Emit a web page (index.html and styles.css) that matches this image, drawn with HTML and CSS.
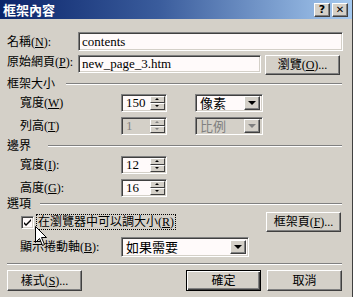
FILE: index.html
```html
<!DOCTYPE html>
<html lang="zh-Hant">
<head>
  <meta charset="UTF-8" />
  <title>框架內容</title>
  <link rel="stylesheet" href="styles.css">
</head>
<body>
  <div class="dialog">
    <div class="titlebar">
      <span class="title">框架內容</span>
      <div class="tb-btns">
        <span class="tb-btn">?</span>
        <span class="tb-btn tb-close">✕</span>
      </div>
    </div>

    <div class="content">
      <div class="row r-name">
        <span class="lbl">名稱(<u>N</u>):</span>
        <div class="field f-name">contents</div>
      </div>

      <div class="row r-src">
        <span class="lbl">原始網頁(<u>P</u>):</span>
        <div class="field f-src">new_page_3.htm</div>
        <span class="btn btn-browse">瀏覽(<u>O</u>)...</span>
      </div>

      <div class="heading h-size">
        <span>框架大小</span>
        <div class="rule"></div>
      </div>

      <div class="row r-sub r-w">
        <span class="lbl sub">寬度(<u>W</u>)</span>
        <div class="spin">
          <span class="spin-val">150</span>
          <div class="spin-btns"><span class="sb up"></span><span class="sb down"></span></div>
        </div>
        <div class="select s-unit">
          <span class="sel-val">像素</span>
          <span class="drop"></span>
        </div>
      </div>

      <div class="row r-sub r-h">
        <span class="lbl sub">列高(<u>T</u>)</span>
        <div class="spin disabled">
          <span class="spin-val">1</span>
          <div class="spin-btns"><span class="sb up"></span><span class="sb down"></span></div>
        </div>
        <div class="select s-unit disabled">
          <span class="sel-val">比例</span>
          <span class="drop"></span>
        </div>
      </div>

      <div class="heading h-margin">
        <span>邊界</span>
        <div class="rule"></div>
      </div>

      <div class="row r-sub r-mw">
        <span class="lbl sub">寬度(<u>I</u>):</span>
        <div class="spin">
          <span class="spin-val">12</span>
          <div class="spin-btns"><span class="sb up"></span><span class="sb down"></span></div>
        </div>
      </div>

      <div class="row r-sub r-mh">
        <span class="lbl sub">高度(<u>G</u>):</span>
        <div class="spin">
          <span class="spin-val">16</span>
          <div class="spin-btns"><span class="sb up"></span><span class="sb down"></span></div>
        </div>
      </div>

      <div class="heading h-opt">
        <span>選項</span>
        <div class="rule"></div>
      </div>

      <div class="row r-check">
        <div class="check-wrap">
          <span class="checkbox">
            <svg width="9" height="9" viewBox="0 0 9 9"><path d="M1 4 L3 6 L8 1 L8 3 L3 8 L1 6 Z" fill="#000"/></svg>
          </span>
          <span class="check-lbl">在瀏覽器中可以調大小(<u>R</u>)</span>
        </div>
        <span class="btn btn-frame">框架頁(<u>F</u>)...</span>
      </div>

      <div class="row r-sub r-scroll">
        <span class="lbl sub">顯示捲動軸(<u>B</u>):</span>
        <div class="select s-scroll">
          <span class="sel-val">如果需要</span>
          <span class="drop"></span>
        </div>
      </div>

      <div class="separator"></div>

      <div class="row r-buttons">
        <span class="btn">樣式(<u>S</u>)...</span>
        <div class="btn-group">
          <span class="btn btn-default">確定</span>
          <span class="btn">取消</span>
        </div>
      </div>
    </div>

    <svg class="cursor" width="13" height="21" viewBox="0 0 13 21">
      <path d="M0.5 0.5 L0.5 16.5 L4.5 12.5 L7.5 19.5 L9.5 18.5 L6.5 11.5 L11.5 11.5 Z" fill="#fff" stroke="#000" stroke-width="1"/>
    </svg>
  </div>
</body>
</html>
```

FILE: styles.css
```css
:root {
  --face: #d4d0c8;
  --shadow: #808080;
  --dark: #404040;
  --light: #ffffff;
  --field: #fffafa;
}
* {
  margin: 0;
  padding: 0;
  box-sizing: border-box;
}
body {
  width: 353px;
  height: 297px;
  overflow: hidden;
  background: var(--face);
  font-family: 'Liberation Serif', 'Noto Sans CJK TC', serif;
  font-size: 12px;
  color: #000;
}
u {
  text-decoration: underline;
  text-underline-offset: 1px;
}
.dialog {
  position: relative;
  width: 353px;
  height: 297px;
  background: var(--face);
  border-right: 1px solid var(--dark);
}
.titlebar {
  height: 19px;
  display: flex;
  align-items: center;
  justify-content: space-between;
  padding: 0 4px 0 3px;
  background: linear-gradient(to right, #0a246a, #3a5c9c 45%, #a6caf0);
}
.title {
  color: #fff;
  font-family: 'Noto Sans CJK TC', sans-serif;
  font-weight: bold;
  font-size: 13px;
  line-height: 15px;
}
.tb-btns {
  display: flex;
  gap: 2px;
}
.tb-btn {
  width: 16px;
  height: 14px;
  display: flex;
  align-items: center;
  justify-content: center;
  background: var(--face);
  border-top: 1px solid var(--light);
  border-left: 1px solid var(--light);
  border-right: 1px solid var(--dark);
  border-bottom: 1px solid var(--dark);
  box-shadow: inset -1px -1px var(--shadow);
  font-family: 'DejaVu Sans', sans-serif;
  font-weight: bold;
  font-size: 11px;
  line-height: 1;
}
.tb-close {
  font-size: 10px;
}
.content {
  padding: 0 9px 0 7px;
}
.row {
  display: flex;
  align-items: center;
}
.lbl {
  width: 71px;
  flex: none;
  line-height: 14px;
}
.lbl.sub {
  width: 101px;
  margin-left: 13px;
}
.field, .spin, .select {
  background: var(--field);
  border-top: 1px solid var(--shadow);
  border-left: 1px solid var(--shadow);
  border-right: 1px solid var(--light);
  border-bottom: 1px solid var(--light);
  box-shadow: inset 1px 1px var(--dark), inset -1px -1px var(--face);
  display: flex;
  align-items: center;
  font-size: 13px;
}
.field {
  padding-left: 3px;
}
.r-name {
  margin-top: 13px;
  height: 19px;
}
.f-name {
  flex: 1;
  height: 19px;
}
.r-src {
  margin-top: 4px;
  height: 21px;
  align-items: flex-start;
}
.f-src {
  width: 183px;
  height: 18px;
}
.btn {
  width: 75px;
  height: 21px;
  display: flex;
  align-items: center;
  justify-content: center;
  background: var(--face);
  border-top: 1px solid var(--light);
  border-left: 1px solid var(--light);
  border-right: 1px solid var(--dark);
  border-bottom: 1px solid var(--dark);
  box-shadow: inset -1px -1px var(--shadow);
  font-size: 12px;
  line-height: 14px;
}
.btn-browse {
  margin-left: 4px;
  height: 20px;
}
.heading {
  display: flex;
  align-items: center;
  height: 14px;
  line-height: 14px;
}
.rule {
  flex: 1;
  height: 2px;
  border-top: 1px solid var(--shadow);
  border-bottom: 1px solid var(--light);
  margin-right: 1px;
}
.h-size {
  margin-top: 1px;
}
.h-size .rule {
  margin-left: 11px;
}
.h-margin {
  margin-top: 4px;
}
.h-margin .rule {
  margin-left: 17px;
}
.h-opt .rule {
  margin-left: 9px;
}
.r-sub {
  height: 18px;
}
.r-w {
  margin-top: 3px;
}
.r-h {
  margin-top: 5px;
}
.r-mw {
  margin-top: 3px;
}
.r-mh {
  margin-top: 5px;
}
.spin {
  width: 46px;
  height: 18px;
  justify-content: space-between;
  padding: 2px 1px 2px 4px;
}
.spin-val {
  line-height: 14px;
}
.spin-btns {
  width: 15px;
  height: 14px;
  display: flex;
  flex-direction: column;
}
.sb {
  flex: 1;
  position: relative;
  background: var(--face);
  border-top: 1px solid var(--light);
  border-left: 1px solid var(--light);
  border-right: 1px solid var(--dark);
  border-bottom: 1px solid var(--dark);
}
.sb::after {
  content: "";
  position: absolute;
  left: 4px;
  top: 1px;
  border-left: 2px solid transparent;
  border-right: 2px solid transparent;
}
.sb.up::after {
  border-bottom: 2px solid #000;
}
.sb.down::after {
  border-top: 2px solid #000;
}
.select {
  height: 18px;
  justify-content: space-between;
  padding: 2px;
}
.s-unit {
  width: 68px;
  margin-left: 28px;
}
.sel-val {
  padding-left: 2px;
  font-family: 'Noto Sans CJK TC', sans-serif;
  font-size: 13px;
  line-height: 14px;
}
.drop {
  width: 16px;
  height: 14px;
  position: relative;
  background: var(--face);
  border-top: 1px solid var(--light);
  border-left: 1px solid var(--light);
  border-right: 1px solid var(--dark);
  border-bottom: 1px solid var(--dark);
  box-shadow: inset -1px -1px var(--shadow);
}
.drop::after {
  content: "";
  position: absolute;
  left: 3px;
  top: 4px;
  border-left: 4px solid transparent;
  border-right: 4px solid transparent;
  border-top: 4px solid #000;
}
.disabled {
  background: var(--face);
  color: var(--shadow);
}
.disabled .sb.up::after {
  border-bottom-color: var(--shadow);
}
.disabled .sb.down::after {
  border-top-color: var(--shadow);
}
.disabled .drop::after {
  border-top-color: var(--shadow);
}
.r-check {
  margin-top: 1px;
  height: 20px;
  justify-content: space-between;
}
.check-wrap {
  display: flex;
  align-items: center;
  margin-left: 14px;
}
.checkbox {
  width: 13px;
  height: 13px;
  display: flex;
  align-items: center;
  justify-content: center;
  background: var(--field);
  border-top: 1px solid var(--shadow);
  border-left: 1px solid var(--shadow);
  border-right: 1px solid var(--light);
  border-bottom: 1px solid var(--light);
  box-shadow: inset 1px 1px var(--dark), inset -1px -1px var(--face);
}
.check-lbl {
  margin-left: 3px;
  padding: 0 1px;
  line-height: 14px;
  outline: 1px dotted #000;
}
.btn-frame {
  margin-right: 2px;
  height: 20px;
}
.r-scroll {
  margin-top: 5px;
  height: 20px;
}
.s-scroll {
  width: 128px;
  height: 20px;
  padding: 3px 2px;
}
.separator {
  margin-top: 6px;
  height: 2px;
  border-top: 1px solid var(--shadow);
  border-bottom: 1px solid var(--light);
  margin-right: 1px;
}
.r-buttons {
  margin-top: 5px;
  height: 21px;
  justify-content: space-between;
}
.btn-group {
  display: flex;
  gap: 6px;
  margin-right: 1px;
}
.btn-default {
  border: 1px solid #000;
  box-shadow: inset 1px 1px var(--light), inset -1px -1px var(--dark), inset -2px -2px var(--shadow);
}
.cursor {
  position: absolute;
  left: 35px;
  top: 226px;
}
```
